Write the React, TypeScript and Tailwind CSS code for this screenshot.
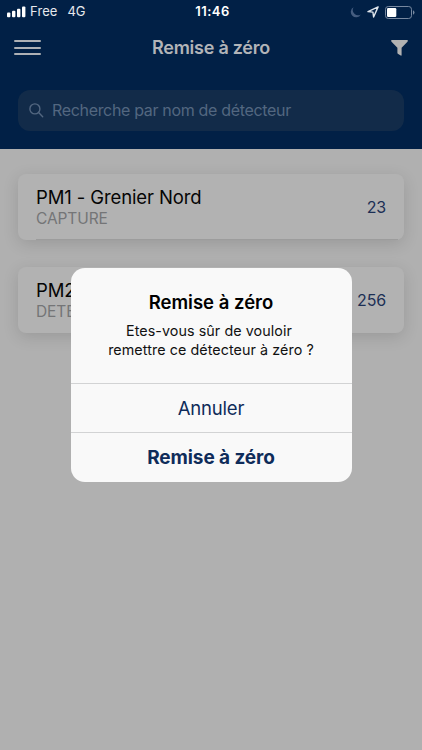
interface DetectorCardProps {
  name: string;
  status: string;
  count: number;
  underline?: boolean;
}

const detectors: DetectorCardProps[] = [
  { name: "PM1 - Grenier Nord", status: "CAPTURE", count: 23, underline: true },
  { name: "PM2", status: "DETEC", count: 256 },
];

const StatusBar = () => {
  return (
    <div className="grid h-6 grid-cols-3 items-center px-[7px] text-white">
      <div className="flex items-center">
        <svg width="19" height="12" viewBox="0 0 19 12" fill="currentColor">
          <rect x="0" y="6.5" width="3.4" height="4.8" rx="1" />
          <rect x="5" y="4.7" width="3.4" height="6.6" rx="1" />
          <rect x="10" y="2.8" width="3.4" height="8.5" rx="1" />
          <rect x="15" y="0.5" width="3.4" height="10.8" rx="1" />
        </svg>
        <span className="ml-[4px] text-[13px] tracking-[0.1px] text-[#e6e9ed]">Free</span>
        <span className="ml-[10px] text-[13px] tracking-[-0.3px] text-[#e6e9ed]">4G</span>
      </div>
      <p className="pl-[3px] text-center text-[13px] font-semibold tracking-[0.5px]">11:46</p>
      <div className="flex items-center justify-end">
        <svg width="11" height="11" viewBox="0 0 11 11" fill="#455d80">
          <path d="M3.6 0.3A5.3 5.3 0 1 0 10.8 7.4A5.2 5.2 0 0 1 3.6 0.3Z" />
        </svg>
        <svg className="ml-[6px]" width="12" height="12" viewBox="0 0 12 12" fill="none" stroke="#dfe5ec" strokeWidth="1.4" strokeLinejoin="round">
          <path d="M11.1 0.9L1 5.6L5.9 6.1L6.6 11Z" />
        </svg>
        <svg className="ml-[6px]" width="30" height="13" viewBox="0 0 30 13">
          <rect x="0.5" y="0.5" width="26" height="12" rx="2.8" fill="none" stroke="#7788a0" />
          <rect x="2" y="2" width="9.3" height="9" rx="1.2" fill="#fff" />
          <path d="M28 4.3Q29.5 5 29.5 6.5T28 8.7Z" fill="#7788a0" />
        </svg>
      </div>
    </div>
  );
};

const Header = () => {
  return (
    <header className="h-[149px] bg-[#012046]">
      <StatusBar />
      <div className="flex h-[47px] items-center justify-between px-[14px]">
        <button className="flex w-[27px] flex-col gap-[4.5px]">
          <span className="h-[2px] rounded-full bg-[#adb0b5]" />
          <span className="h-[2px] rounded-full bg-[#adb0b5]" />
          <span className="h-[2px] rounded-full bg-[#adb0b5]" />
        </button>
        <h1 className="text-[18px] font-semibold tracking-[-0.25px] text-[#b2b4b8]">Remise à zéro</h1>
        <div className="flex w-[27px] justify-end">
          <svg width="17" height="16" viewBox="0 0 17 16" fill="#b2b2b2">
            <path d="M0.7 0H16.3Q17 0 16.8 0.9Q16.6 1.6 16 2.2L10.6 7.7V15Q10.6 16 9.7 15.5L6.8 13.7Q6.4 13.4 6.4 13V7.7L1 2.2Q0.4 1.6 0.2 0.9Q0 0 0.7 0Z" />
          </svg>
        </div>
      </div>
      <div className="mx-[18px] mt-[19px] flex h-[41px] items-center rounded-[12px] bg-[#122b49] pl-[11px] text-[#536780]">
        <svg width="15" height="15" viewBox="0 0 15 15" fill="none" stroke="currentColor" strokeWidth="1.4" strokeLinecap="round">
          <circle cx="5.9" cy="5.9" r="5" />
          <path d="M9.6 9.6L13.7 13.7" />
        </svg>
        <span className="ml-[8px] pb-[2px] text-[16px] tracking-[-0.33px]">Recherche par nom de détecteur</span>
      </div>
    </header>
  );
};

const DetectorCard = ({ name, status, count, underline }: DetectorCardProps) => {
  return (
    <div className="flex h-[66px] flex-col rounded-[8px] bg-[#b2b2b2] pl-[18px] shadow-[0_4px_16px_rgba(0,0,0,0.13)]">
      <div className="flex items-start justify-between pt-[12px] pr-[18px]">
        <div>
          <p className="text-[18.5px] leading-[22px] tracking-[-0.12px] text-[#050505]">{name}</p>
          <p className="text-[15.5px] leading-[21px] tracking-[-0.1px] text-[#747577]">{status}</p>
        </div>
        <span className="pt-[9px] text-[16px] leading-[24px] tracking-[-0.15px] text-[#1c2f55]">{count}</span>
      </div>
      {underline && <div className="mt-auto mr-[6px] h-px bg-[#9c9c9c]" />}
    </div>
  );
};

const ResetDialog = () => {
  return (
    <div className="absolute top-[268px] left-[70.5px] flex h-[214px] w-[281px] flex-col overflow-hidden rounded-[14px] bg-[#f9f9f9] text-center">
      <div className="h-[115.5px] border-b border-[#d2d3d4] pt-[22px]">
        <h2 className="text-[18.5px] leading-[24px] font-semibold text-black">Remise à zéro</h2>
        <p className="mt-[7px] text-[14.3px] leading-[19px] tracking-[0.08px] text-[#111]">
          <span className="pr-[4px]">Etes-vous sûr de vouloir</span>
          <br />
          remettre ce détecteur à zéro ?
        </p>
      </div>
      <button className="h-[49.5px] border-b border-[#d2d3d4] pt-[2px] text-[18.5px] tracking-[-0.2px] text-[#0f2c5a]">Annuler</button>
      <button className="flex-1 pt-[2px] text-[19px] font-bold tracking-[-0.08px] text-[#0f2c5a]">Remise à zéro</button>
    </div>
  );
};

const App = () => {
  return (
    <div className="relative h-[750px] w-[422px] overflow-hidden bg-[#b0b0b0] font-['Inter',sans-serif]">
      <Header />
      <div className="flex flex-col gap-[27px] px-[18px] pt-[25px]">
        {detectors.map((detector) => (
          <DetectorCard key={detector.name} {...detector} />
        ))}
      </div>
      <ResetDialog />
    </div>
  );
};

export default App;
